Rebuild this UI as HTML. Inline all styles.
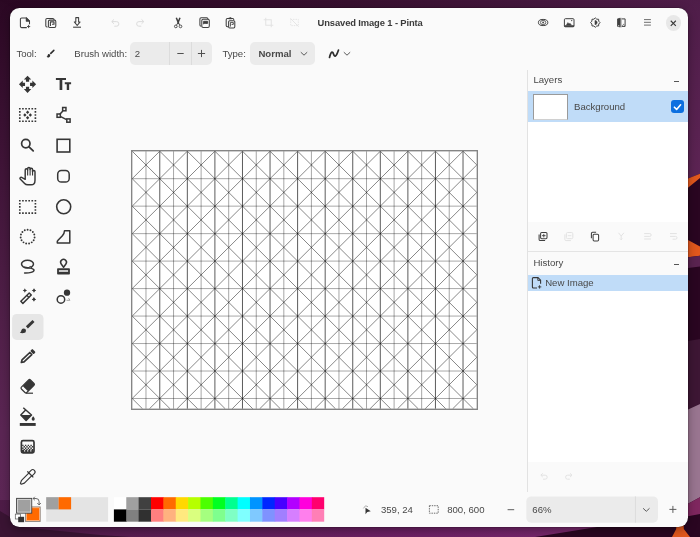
<!DOCTYPE html>
<html><head><meta charset="utf-8"><title>Pinta</title>
<style>
html,body{margin:0;padding:0;}
body{width:700px;height:537px;overflow:hidden;position:relative;background:#2c0a25;font-family:"Liberation Sans",sans-serif;color:#484848;font-size:9.6px;}
#wall{position:absolute;left:0;top:0;}
#win{position:absolute;left:10px;top:8px;width:678.2px;height:519px;background:#fafafa;border-radius:9.5px;box-shadow:0 0 0 0.5px rgba(0,0,0,.25),0 3px 10px rgba(0,0,0,.35);overflow:hidden;}
.t{position:absolute;white-space:nowrap;line-height:12px;height:12px;}
.b{font-weight:bold;}
.abs{position:absolute;}
svg{position:absolute;overflow:visible;}
</style></head><body>
<svg id="wall" width="700" height="537" viewBox="0 0 700 537">
<defs>
<linearGradient id="gl" x1="0" y1="0" x2="0" y2="1"><stop offset="0" stop-color="#2b0823"/><stop offset="0.3" stop-color="#3f1437"/><stop offset="0.6" stop-color="#512049"/><stop offset="0.8" stop-color="#5b2654"/><stop offset="1" stop-color="#5e2757"/></linearGradient>
<linearGradient id="gt" x1="0" y1="0" x2="1" y2="0"><stop offset="0" stop-color="#2a0722"/><stop offset="0.5" stop-color="#37102f"/><stop offset="1" stop-color="#4f1d49"/></linearGradient>
<linearGradient id="gr" x1="0" y1="0" x2="0" y2="1"><stop offset="0" stop-color="#4f1d49"/><stop offset="1" stop-color="#5d2454"/></linearGradient>
<linearGradient id="gb" x1="0" y1="0" x2="1" y2="0"><stop offset="0" stop-color="#4e1c47"/><stop offset="0.35" stop-color="#5f1e58"/><stop offset="0.6" stop-color="#6a1f62"/><stop offset="0.8" stop-color="#722469"/><stop offset="1" stop-color="#7a2a6c"/></linearGradient>
</defs>
<rect width="700" height="537" fill="#2a0621"/>
<!-- top strip -->
<rect x="0" y="0" width="700" height="20" fill="url(#gt)"/>
<!-- left strip -->
<polygon points="0,0 30,20 30,537 0,537" fill="url(#gl)"/>
<!-- bottom strip -->
<polygon points="0,500 620,500 597,527 535,537 0,537" fill="url(#gb)"/>
<polygon points="0,511 10,517 25,527.500 100,535 130,537 0,537" fill="#3a1433"/>
<!-- right strip -->
<polygon points="670,20 700,0 700,173.700 688,178.400 670,185" fill="url(#gr)"/>
<polygon points="670,185 688,178.400 700,173.700 700,177.900 688,187.700 670,202" fill="#e2581d"/>
<polygon points="670,230 688,240 700,246.500 700,255.800 688,257.200 670,259" fill="#e2581d"/>
<polygon points="670,259 688,257.200 700,255.800 700,266.500 688,267.900 670,270" fill="#5a2350"/>
<polygon points="670,343.500 688,340.900 700,339 700,404 688,409.500 670,418" fill="#3d1634"/>
<polygon points="670,418 688,409.500 700,404 700,497.200 688,503.700 670,513" fill="#997590"/>
<polygon points="670,513 688,503.700 700,497.200 700,514 688,516.300 670,520" fill="#7f275f"/>
<polygon points="676.600,520 683.400,520 683.800,529 690,537 672,537 676.200,529" fill="#e2581d"/>
</svg>
<div id="win"><div id="in" style="position:absolute;left:0;top:-1px;width:678.2px;height:520px;will-change:transform;">

<!-- ===== header bar ===== -->
<svg class="hi" style="left:100px;top:10.5px" width="10.5" height="10.5" viewBox="0 0 16 16" fill="none" stroke="#dadada" stroke-width="1.5"><path d="M3 5.5h7a3.5 3.5 0 0 1 0 7H6.5"/><path d="M6 2.2L2.6 5.5 6 8.8" /></svg>
<svg class="hi" style="left:125px;top:10.5px" width="10.5" height="10.5" viewBox="0 0 16 16" fill="none" stroke="#dadada" stroke-width="1.5"><path d="M13 5.5H6a3.5 3.5 0 0 0 0 7h3.5"/><path d="M10 2.2l3.4 3.3L10 8.800" /></svg>
<svg class="hi" style="left:252.500px;top:10px" width="11" height="11" viewBox="0 0 16 16" fill="none" stroke="#e3e3e3" stroke-width="1.500"><path d="M4 1v11h11M1 4h11v11"/></svg>
<svg class="hi" style="left:278.500px;top:10px" width="11" height="11" viewBox="0 0 16 16" fill="none" stroke="#e4e4e4" stroke-width="1.400"><rect x="2.500" y="3.500" width="11" height="9" stroke-dasharray="2 1.500"/><path d="M2 2l12 12"/></svg>
<div class="t b" id="title" style="left:307.600px;top:9.500px;font-size:9.400px;letter-spacing:-0.120px;color:#3a3a3a;">Unsaved Image 1 - Pinta</div>
<div class="abs" style="left:655.600px;top:8.300px;width:15.400px;height:15.400px;border-radius:50%;background:#e8e8e8;"></div>
<svg class="hi" style="left:660.1px;top:12.8px" width="6.6" height="6.6" viewBox="0 0 7 7" fill="none" stroke="#383838" stroke-width="1.15"><path d="M.8 .8l5.400 5.400M6.200 .8L.8 6.200"/></svg>

<svg id="hdr" style="left:-10px;top:-7px" width="700" height="537" viewBox="0 0 700 537">
<g fill="none" stroke="#404040" stroke-width="1.05" stroke-linejoin="round">
<!-- new -->
<path d="M26.800 27.600H21.700a1.300 1.300 0 0 1-1.300-1.300V19.200a1.300 1.300 0 0 1 1.300-1.300h4.600l3.200 3.200v3.200"/>
<path d="M26.300 17.900v3.200h3.200z" fill="#404040"/>
<path d="M28.600 24.900v3.200M27 26.500h3.200" stroke-width="0.9"/>
<!-- open -->
<path d="M47.600 26.900h-.6a1.200 1.200 0 0 1-1.200-1.200v-6a1.200 1.200 0 0 1 1.200-1.200h5.800a1.200 1.200 0 0 1 1.200 1.200v.4"/>
<rect x="48.400" y="20.100" width="7.400" height="7.300" rx="1.400"/>
<path d="M50.400 26V21.900h3.600v2.300h-2" stroke-width="1.100"/>
<!-- cut -->
<path d="M176.300 17.700l2.500 6.200M180 17.700l-2.500 6.200" stroke-width="1.500"/>
<path d="M177.500 23.500l-1 1.600M178.800 23.500l1 1.600" stroke-width="0.9"/>
<circle cx="175.800" cy="26.400" r="1.350" stroke-width="0.9"/><circle cx="180.500" cy="26.400" r="1.350" stroke-width="0.9"/>
<!-- copy -->
<path d="M201.400 26.200h-.3a1.200 1.200 0 0 1-1.200-1.200v-6a1.200 1.200 0 0 1 1.200-1.200h5.600a1.200 1.200 0 0 1 1.200 1.200v.2"/>
<rect x="201.800" y="19.200" width="7.500" height="8.200" rx="1.400"/>
<path d="M203.600 24.200V21.300h4v2.100h-2.400" stroke-width="0.900" fill="#404040"/>
<!-- paste -->
<path d="M228.400 26.700h-1a1.200 1.200 0 0 1-1.200-1.200v-5.800a1.200 1.200 0 0 1 1.200-1.200h5.200a1.200 1.200 0 0 1 1.200 1.200v.6"/>
<path d="M228.600 18.800v-.6h1l.6-.9.600 .9h1v.6z" fill="#404040" stroke-width="0.8"/>
<rect x="228.600" y="20.700" width="6.200" height="7.200" rx="1.100"/>
<path d="M230.400 26.600v-4.200h2.900v2h-1.700" stroke-width="0.900"/>
<!-- view -->
<ellipse cx="543.100" cy="22.500" rx="4.700" ry="3.100" stroke-width="1"/>
<ellipse cx="543.100" cy="22.500" rx="2.700" ry="2.100" stroke-width="0.800"/>
<circle cx="543.100" cy="22.500" r="0.900" fill="#404040" stroke="none"/>
<!-- image -->
<rect x="564.400" y="18.700" width="9.600" height="8" rx="1" stroke-width="1"/>
<path d="M564.400 25.600h9.600v.6a.5 .5 0 0 1-.5 .5h-8.600a.5 .5 0 0 1-.5-.5z" fill="#404040" stroke-width="0.6"/>
<path d="M566.300 25.200l1.600-2.600 1.200 1.400.9-.8 1.500 2z" fill="#404040" stroke-width="0.5"/>
<circle cx="571.700" cy="20.600" r="0.700" fill="#404040" stroke="none"/>
<!-- adjustments -->
<polygon points="595.30,17.90 596.72,19.18 598.62,19.28 598.72,21.18 600.00,22.60 598.72,24.02 598.62,25.92 596.72,26.02 595.30,27.30 593.88,26.02 591.98,25.92 591.88,24.02 590.60,22.60 591.88,21.18 591.98,19.28 593.88,19.18" stroke-width="1"/>
<path d="M595 20.500a2.100 2.100 0 0 1 0 4.200z" fill="#404040" stroke-width="0.600"/>
<!-- effects -->
<path d="M620 18.300l-2.500 .6v7.400l2.500 .6z" fill="#404040" stroke-width="0.800"/>
<path d="M621.800 18.900h3.300v7.500h-3.300" stroke-width="1"/>
<path d="M620.900 17.800v9.600" stroke-width="0.800"/><path d="M618.200 25.300h1v1h-1z" fill="#fafafa" stroke="none"/>
<path d="M622.400 25.800l1.100-1.500 1.100 1" stroke-width="0.700"/>
<!-- menu -->
<path d="M644 19.600h6.900M644 22.300h6.900M644 25.100h6.900" stroke="#5e5e5e" stroke-width="0.9"/>
<!-- save -->
<path d="M75.800 17.600h2.800v4.300h1.500l-2.900 3.600-2.900-3.600h1.500z"/>
<path d="M73.100 27.200h7.900" stroke-width="1.100"/>
</g>
</svg>
<!-- ===== tool options bar ===== -->
<div class="t" style="left:6.400px;top:41.100px;">Tool:</div>
<svg style="left:36.3px;top:41.9px" width="9.2" height="9.2" viewBox="0 0 16 16"><path d="M14.600 1.400a1.300 1.300 0 0 0-1.900 0L6.500 7.600l1.900 1.900 6.200-6.200a1.300 1.300 0 0 0 0-1.900z" fill="#2e2e2e"/><path d="M5.600 8.600C4 8.400 2.800 9.600 2.800 11.200c0 1.200-.8 2-1.800 2.400 1 1 2.400 1.400 3.800 1 2-.6 2.800-2.400 2.400-4.200z" fill="#2e2e2e"/></svg>
<div class="t" style="left:64.300px;top:41.100px;">Brush width:</div>
<div class="abs" style="left:120.300px;top:35px;width:82.200px;height:22.800px;border-radius:5px;background:#ebebeb;"></div>
<div class="abs" style="left:159.200px;top:35px;width:1px;height:22.800px;background:#dcdcdc;"></div>
<div class="abs" style="left:180.700px;top:35px;width:1px;height:22.800px;background:#dcdcdc;"></div>
<div class="t" style="left:124.700px;top:41.100px;">2</div>
<svg style="left:165.5px;top:42px" width="9" height="9" viewBox="0 0 9 9" stroke="#505050" stroke-width="1"><path d="M1.3 4.5h6.4"/></svg>
<svg style="left:187px;top:42px" width="9" height="9" viewBox="0 0 9 9" stroke="#505050" stroke-width="1"><path d="M0.9 4.5h7.2M4.5 0.9v7.2"/></svg>
<div class="t" style="left:212.400px;top:41.100px;">Type:</div>
<div class="abs" style="left:240px;top:34.500px;width:65px;height:23.200px;border-radius:5px;background:#ebebeb;"></div>
<div class="t b" style="left:248.400px;top:41.100px;font-size:9.600px;">Normal</div>
<svg style="left:290px;top:44px" width="8" height="6" viewBox="0 0 8 6" fill="none" stroke="#5a5a5a" stroke-width="1"><path d="M.8 1.200l3.200 3 3.200-3"/></svg>
<svg style="left:317.500px;top:40.500px" width="12" height="12" viewBox="0 0 12 12" fill="none" stroke="#2e2e2e" stroke-width="1.700" stroke-linecap="round" stroke-linejoin="round"><path d="M1.500 9.500C3 3 4.500 3 5.500 6S8 9.500 10.500 2"/></svg>
<svg style="left:333px;top:44px" width="8" height="6" viewBox="0 0 8 6" fill="none" stroke="#5a5a5a" stroke-width="1"><path d="M.8 1.200l3.200 3 3.200-3"/></svg>

<!-- ===== toolbox ===== -->
<svg style="left:-10px;top:-7px" width="700" height="537" viewBox="0 0 700 537">
<g fill="#363636"><path transform="translate(27.55 84.3) rotate(0)" d="M0 -8.6L3.7 -4.8H1.6V-2.5H-1.6V-4.8H-3.7z"/><path transform="translate(27.55 84.3) rotate(90)" d="M0 -8.6L3.7 -4.8H1.6V-2.5H-1.6V-4.8H-3.7z"/><path transform="translate(27.55 84.3) rotate(180)" d="M0 -8.6L3.7 -4.8H1.6V-2.5H-1.6V-4.8H-3.7z"/><path transform="translate(27.55 84.3) rotate(270)" d="M0 -8.6L3.7 -4.8H1.6V-2.5H-1.6V-4.8H-3.7z"/></g>
<path fill="#363636" d="M55.900 78h10.100v2.100h-3.700v10h-2.700v-10h-3.700z"/>
<path fill="#363636" d="M64.800 82.300h6.300v1.900h-1.950v5.900h-2.400v-5.900h-1.950z"/>
<path fill="#363636" d="M18.98 107.97h1.65v1.65h-1.65zM18.98 111.07h1.65v1.65h-1.65zM18.98 114.17h1.65v1.65h-1.65zM18.98 117.27h1.65v1.65h-1.65zM18.98 120.38h1.65v1.65h-1.65zM22.10 107.97h1.65v1.65h-1.65zM22.10 120.38h1.65v1.65h-1.65zM25.21 107.97h1.65v1.65h-1.65zM25.21 120.38h1.65v1.65h-1.65zM28.34 107.97h1.65v1.65h-1.65zM28.34 120.38h1.65v1.65h-1.65zM31.46 107.97h1.65v1.65h-1.65zM31.46 120.38h1.65v1.65h-1.65zM34.58 107.97h1.65v1.65h-1.65zM34.58 111.07h1.65v1.65h-1.65zM34.58 114.17h1.65v1.65h-1.65zM34.58 117.27h1.65v1.65h-1.65zM34.58 120.38h1.65v1.65h-1.65z"/>
<path fill="#363636" d="M27.60 110.60L29.25 112.25L27.60 113.90L25.95 112.25zM30.35 113.35L32.00 115.00L30.35 116.65L28.70 115.00zM27.60 116.10L29.25 117.75L27.60 119.40L25.95 117.75zM24.85 113.35L26.50 115.00L24.85 116.65L23.20 115.00z"/>
<g fill="none" stroke="#363636" stroke-width="1.5"><path d="M62.900 110.900L59.800 114.300M60.700 116.700L66.600 119.700"/><rect x="62.650" y="107.500" width="3.300" height="3.300"/><rect x="57.050" y="114" width="3.300" height="3.300"/><rect x="66.800" y="118.900" width="3.300" height="3.300"/></g>
<g fill="none" stroke="#363636" stroke-width="1.7"><circle cx="25.800" cy="143.600" r="4.200"/><path d="M29 146.900L33.200 150.900" stroke-width="1.8" stroke-linecap="round"/></g>
<rect x="57.100" y="139.300" width="12.700" height="12.700" fill="none" stroke="#363636" stroke-width="1.6"/>
<path fill="none" stroke="#363636" stroke-width="1.45" stroke-linejoin="round" stroke-linecap="round" d="M25.200 179.300V170a1.225 1.225 0 0 1 2.450 0V168.700a1.225 1.225 0 0 1 2.450 0V169.400a1.225 1.225 0 0 1 2.450 0V171.800a1.225 1.225 0 0 1 2.450 0V180.200C35 183 33.700 184.800 31.100 184.800H27.800C26.400 184.800 25.400 184.300 24.600 183.400L20.200 179C19.400 178 20.600 176.900 21.600 177.400z"/>
<path fill="none" stroke="#363636" stroke-width="1.1" d="M27.650 170V175.400M30.100 169.200V175.400M32.550 170.500V175.400"/>
<rect x="57.700" y="170.500" width="11.500" height="11.600" rx="3.700" fill="none" stroke="#363636" stroke-width="1.5"/>
<path fill="#363636" d="M18.98 199.88h1.65v1.65h-1.65zM18.98 202.97h1.65v1.65h-1.65zM18.98 206.07h1.65v1.65h-1.65zM18.98 209.18h1.65v1.65h-1.65zM18.98 212.28h1.65v1.65h-1.65zM22.10 199.88h1.65v1.65h-1.65zM22.10 212.28h1.65v1.65h-1.65zM25.21 199.88h1.65v1.65h-1.65zM25.21 212.28h1.65v1.65h-1.65zM28.34 199.88h1.65v1.65h-1.65zM28.34 212.28h1.65v1.65h-1.65zM31.46 199.88h1.65v1.65h-1.65zM31.46 212.28h1.65v1.65h-1.65zM34.58 199.88h1.65v1.65h-1.65zM34.58 202.97h1.65v1.65h-1.65zM34.58 206.07h1.65v1.65h-1.65zM34.58 209.18h1.65v1.65h-1.65zM34.58 212.28h1.65v1.65h-1.65z"/>
<circle cx="63.700" cy="206.800" r="7" fill="none" stroke="#363636" stroke-width="1.6"/>
<g fill="#363636"><circle cx="27.62" cy="229.70" r="0.95"/><circle cx="30.47" cy="230.31" r="0.95"/><circle cx="32.82" cy="232.02" r="0.95"/><circle cx="34.28" cy="234.54" r="0.95"/><circle cx="34.58" cy="237.43" r="0.95"/><circle cx="33.68" cy="240.20" r="0.95"/><circle cx="31.73" cy="242.36" r="0.95"/><circle cx="29.08" cy="243.55" r="0.95"/><circle cx="26.16" cy="243.55" r="0.95"/><circle cx="23.51" cy="242.36" r="0.95"/><circle cx="21.56" cy="240.20" r="0.95"/><circle cx="20.66" cy="237.43" r="0.95"/><circle cx="20.96" cy="234.54" r="0.95"/><circle cx="22.42" cy="232.02" r="0.95"/><circle cx="24.77" cy="230.31" r="0.95"/></g>
<path fill="none" stroke="#363636" stroke-width="1.5" stroke-linejoin="round" d="M64.500 230.700H69.800V243H57.300V241.600C57.300 241.200 57.500 240.900 57.800 240.600L62.400 235.700C63.800 234.200 64.400 232.800 64.500 230.700z"/>
<g fill="none" stroke="#363636" stroke-width="1.5" stroke-linecap="round"><ellipse cx="27.500" cy="264.100" rx="6" ry="3.800"/><path d="M24.400 267.200C29 268.200 33.500 268 34 270C34.400 272.200 29 273.200 24.600 273"/><circle cx="30.300" cy="267.300" r="0.900" fill="#fafafa" stroke-width="0.9"/></g>
<path fill="none" stroke="#363636" stroke-width="1.5" stroke-linejoin="round" d="M63.550 267.300L61.200 264A2.900 2.900 0 1 1 65.900 264z"/>
<path fill="#363636" d="M57.900 268.300H69.100a.8 .8 0 0 1 .8 .8V273.800a.8 .8 0 0 1-.8 .8H57.900a.8 .8 0 0 1-.8-.8V269.100a.8 .8 0 0 1 .8-.8zM58.900 270.200h9.200v1.500H58.900z" fill-rule="evenodd"/>
<g transform="translate(26.05 298.2) rotate(-44.7)"><rect x="-5.9" y="-1.45" width="11.8" height="2.9" fill="none" stroke="#363636" stroke-width="1.5" stroke-linejoin="round"/><path d="M2.6 -1.600V1.600" stroke="#363636" stroke-width="1.2"/></g>
<path fill="#363636" d="M24.85 288.3L25.58 289.77L27.05 290.5L25.58 291.23L24.85 292.7L24.12 291.23L22.650000000000002 290.5L24.12 289.77z"/><path fill="#363636" d="M33.95 288.3L34.68 289.77L36.150000000000006 290.5L34.68 291.23L33.95 292.7L33.22 291.23L31.750000000000004 290.5L33.22 289.77z"/><path fill="#363636" d="M33.95 297.3L34.68 298.77L36.150000000000006 299.5L34.68 300.23L33.95 301.7L33.22 300.23L31.750000000000004 299.5L33.22 298.77z"/>
<path fill="#363636" d="M34.1 288.40000000000003L34.632000000000005 289.76800000000003L36.0 290.3L34.632000000000005 290.832L34.1 292.2L33.568 290.832L32.2 290.3L33.568 289.76800000000003z"/>
<path fill="#363636" d="M33.9 297.09999999999997L34.488 298.61199999999997L36.0 299.2L34.488 299.788L33.9 301.3L33.312 299.788L31.799999999999997 299.2L33.312 298.61199999999997z"/>
<circle cx="60.950" cy="299.400" r="3.750" fill="none" stroke="#363636" stroke-width="1.5"/><circle cx="67" cy="292.700" r="3.150" fill="#363636"/><path d="M66.500 300.300h3.400l-1.300-2.200" fill="none" stroke="#8a8a8a" stroke-width="0.800"/>
<rect x="12.100" y="314" width="31.400" height="25.900" rx="4.500" fill="#e6e6e6"/>
<path d="M33.5 321L26.9 327.4" stroke="#363636" stroke-width="2.9" fill="none" stroke-linecap="butt"/>
<circle cx="23.7" cy="330.8" r="2.3" fill="#363636"/><path fill="#363636" d="M21.5 330.3c-.1 1.100-.6 1.800-1.700 2.200 1.500.9 3.300.9 4.600.3z"/>
<g transform="translate(20.7 363.1) rotate(-43.4)"><path fill="none" stroke="#363636" stroke-width="1.7" stroke-linejoin="round" d="M0.900 0L3.200 -1.450H13.900V1.450H3.200z"/><rect x="15.300" y="-2.400" width="3" height="4.800" rx=".9" fill="#363636"/></g>
<g transform="translate(27.7 386.2) rotate(-45)"><rect x="-6.400" y="-3.800" width="12.800" height="7.600" rx="1.300" fill="none" stroke="#363636" stroke-width="1.2"/><rect x="-3.400" y="-3.800" width="9.800" height="7.600" rx="1.100" fill="#363636"/></g>
<path d="M25.800 393.200H33" stroke="#363636" stroke-width="1.2"/>
<path fill="none" stroke="#363636" stroke-width="1.5" stroke-linejoin="round" d="M23.300 407.700L31.500 414.950L26.100 420.400L20.800 414.950L25.400 410.300"/><path fill="#363636" d="M20.800 414.950H31.500L26.100 420.400z"/><path fill="#363636" d="M33.200 416.300c.9 1.200 1.550 2 1.550 2.800a1.550 1.550 0 0 1-3.100 0c0-.8.650-1.600 1.550-2.800z"/><rect x="19.800" y="423" width="15.900" height="2.900" fill="#363636"/>
<rect x="21.400" y="440.600" width="12.600" height="12.300" rx="1.600" fill="none" stroke="#363636" stroke-width="1.700"/>
<path fill="#363636" d="M22.20 444.7h1.370v1.400h-1.370zM24.94 444.7h1.370v1.400h-1.370zM27.68 444.7h1.370v1.400h-1.370zM30.42 444.7h1.370v1.400h-1.370zM23.57 446.1h1.370v1.400h-1.370zM26.31 446.1h1.370v1.400h-1.370zM29.05 446.1h1.370v1.400h-1.370zM31.79 446.1h1.370v1.400h-1.370zM22.20 447.5h1.370v1.400h-1.370zM24.94 447.5h1.370v1.400h-1.370zM27.68 447.5h1.370v1.400h-1.370zM30.42 447.5h1.370v1.400h-1.370zM23.57 448.9h1.370v1.400h-1.370zM26.31 448.9h1.370v1.400h-1.370zM29.05 448.9h1.370v1.400h-1.370zM31.79 448.9h1.370v1.400h-1.370z"/>
<path fill="#363636" d="M22 449.800H33.400V452.400H22z"/>
<path fill="#fafafa" d="M24 450.300h1.200v1.200H24zM27.100 450.300h1.200v1.200h-1.200zM30.200 450.300h1.200v1.200h-1.200z"/>
<g transform="translate(30.17 474.5) rotate(-45)" fill="none" stroke="#363636" stroke-width="1.15" stroke-linejoin="round" stroke-linecap="round"><path d="M0 -2H-10.200L-13.200 -0.600V0.600L-10.200 2H0"/><path d="M0.200 -3.700V3.700" stroke-width="1.2"/><path d="M0.400 -2.300H3.600A2.300 2.300 0 0 1 3.600 2.300H0.400"/></g>
</svg>

<!-- ===== canvas ===== -->

<svg style="left:121px;top:143px" width="347" height="260" viewBox="0 0 347 260"><rect width="347" height="260" fill="#858585"/><svg x="1.2" y="1.2" width="344.6" height="257.6" viewBox="0 0 800 600" preserveAspectRatio="none" style="overflow:hidden"><rect width="800" height="600" fill="#fff"/><path d="M64 0V600M128 0V600M192 0V600M256 0V600M320 0V600M384 0V600M448 0V600M512 0V600M576 0V600M640 0V600M704 0V600M768 0V600" stroke="#000" stroke-width="1.5" fill="none"/><path d="M32 0V600M96 0V600M160 0V600M224 0V600M288 0V600M352 0V600M416 0V600M480 0V600M544 0V600M608 0V600M672 0V600M736 0V600" stroke="#000" stroke-width="0.82" fill="none"/><path d="M0 64H800M0 128H800M0 192H800M0 256H800M0 320H800M0 384H800M0 448H800M0 512H800M0 576H800" stroke="#000" stroke-width="0.8" fill="none"/><path d="M768 0L800 32M704 0L800 96M640 0L800 160M576 0L800 224M512 0L800 288M448 0L800 352M384 0L800 416M320 0L800 480M256 0L800 544M192 0L792 600M128 0L728 600M64 0L664 600M0 0L600 600M0 64L536 600M0 128L472 600M0 192L408 600M0 256L344 600M0 320L280 600M0 384L216 600M0 448L152 600M0 512L88 600M0 576L24 600M0 64L64 0M0 128L128 0M0 192L192 0M0 256L256 0M0 320L320 0M0 384L384 0M0 448L448 0M0 512L512 0M0 576L576 0M40 600L640 0M104 600L704 0M168 600L768 0M232 600L800 32M296 600L800 96M360 600L800 160M424 600L800 224M488 600L800 288M552 600L800 352M616 600L800 416M680 600L800 480M744 600L800 544" stroke="#000" stroke-width="1.1" fill="none"/></svg></svg>

<!-- ===== right panel ===== -->
<div class="abs" style="left:517.2px;top:63px;width:1px;height:421.5px;background:#e2e2e2;"></div>
<div class="t" style="left:523.4px;top:67.0px;">Layers</div>
<div class="abs" style="left:663.8px;top:74.3px;width:5.6px;height:1px;background:#555;"></div>
<div class="abs" style="left:518.2px;top:84.2px;width:160px;height:130.8px;background:#ffffff;"></div>
<div class="abs" style="left:518.2px;top:84.2px;width:160px;height:30.4px;background:#c0dcf8;"></div>
<div class="abs" style="left:522.9px;top:86.800px;width:35.2px;height:26px;background:#fff;box-sizing:border-box;border:1px solid #9a9a9a;border-bottom-color:#d0d0d0;"></div>
<div class="t" style="left:564px;top:94.1px;">Background</div>
<div class="abs" style="left:661px;top:93.2px;width:12.8px;height:13px;border-radius:3px;background:#0c6fe0;"></div>
<svg style="left:663px;top:95.600px" width="9" height="8" viewBox="0 0 9 8" fill="none" stroke="#fff" stroke-width="1.6" stroke-linecap="round" stroke-linejoin="round"><path d="M1.400 4.200l2.200 2.200 4-4.600"/></svg>
<div class="abs" style="left:518.2px;top:244.400px;width:160px;height:1px;background:#e4e4e4;"></div>
<div class="t" style="left:523.4px;top:250.2px;">History</div>
<div class="abs" style="left:663.8px;top:257.1px;width:5.6px;height:1px;background:#555;"></div>
<div class="abs" style="left:518.2px;top:267.600px;width:160px;height:187.300px;background:#ffffff;"></div>
<div class="abs" style="left:518.2px;top:267.600px;width:160px;height:16.200px;background:#c0dcf8;"></div>
<div class="t" style="left:535.2px;top:270.1px;">New Image</div>
<svg style="left:-10px;top:-7px" width="700" height="537" viewBox="0 0 700 537">
<!-- layer buttons -->
<g fill="none" stroke="#404040" stroke-width="1.05">
<path d="M539.100 234.400v5a1.200 1.200 0 0 0 1.200 1.200h4.800"/><rect x="540.600" y="232.500" width="6.400" height="6.200" rx="1.100"/><path d="M543.800 233.900v3.500M542.050 235.650h3.500" stroke-width="0.9"/>
<path d="M591.400 238.300v-4.800a1.200 1.200 0 0 1 1.200-1.200h3.500"/><rect x="593.100" y="234.200" width="5.500" height="6.700" rx="1.100" fill="#fff"/>
</g>
<g fill="none" stroke="#e2e2e2" stroke-width="1">
<path d="M564.900 234.400v5a1.200 1.200 0 0 0 1.200 1.200h4.800"/><rect x="566.400" y="232.500" width="6.400" height="6.200" rx="1.100"/><path d="M567.850 235.650h3.500" stroke-width="0.9"/>
<path d="M618.500 232.800l2.700 3.200 2.700-3.200M621.200 236v3.600M620 238.600l1.200 1.200 1.200-1.200"/>
<path d="M644.200 233.600h5.600a1.400 1.400 0 0 1 0 2.800h-5.600M644.200 239h6.800"/>
<path d="M670 233.600h6.800M670 236.400h5.600a1.400 1.400 0 0 1 0 2.800h-3"/>
<!-- history undo/redo -->
<path d="M541 475.200h4.200a2 2 0 0 1 0 4h-2.200M542.700 473.400l-1.900 1.800 1.900 1.800"/>
<path d="M571.800 475.200h-4.200a2 2 0 0 0 0 4h2.200M570.100 473.400l1.900 1.800-1.900 1.800"/>
</g>
<!-- history doc icon -->
<g fill="none" stroke="#363636" stroke-width="1.1"><path d="M537 288h-3.600a1 1 0 0 1-1-1v-8.400a1 1 0 0 1 1-1h4.600l2.600 2.600v3.600"/><path d="M537.800 277.800v2.600h2.600" stroke-width=".9"/><path d="M539.600 285.200v3.400M537.900 286.900h3.400" stroke-width=".9"/></g>
</svg>

<!-- ===== bottom bar ===== -->
<svg style="left:-10px;top:-7px" width="700" height="537" viewBox="0 0 700 537">
<!-- primary / secondary swatches -->
<rect x="25.500" y="506.900" width="14.700" height="14.600" fill="#ff6a00" stroke="#8c8c8c" stroke-width="0.9"/>
<rect x="26.400" y="507.800" width="12.900" height="12.800" fill="none" stroke="#ffd9bf" stroke-width="0.6"/>
<rect x="16.600" y="498.400" width="15.100" height="14.700" fill="#a0a0a0" stroke="#474747" stroke-width="1"/>
<rect x="17.600" y="499.400" width="13.100" height="12.700" fill="none" stroke="#d6d6d6" stroke-width="0.900"/>
<rect x="15.300" y="514.100" width="5.200" height="4.900" fill="#fff" stroke="#555" stroke-width="0.700"/>
<rect x="18.200" y="516.800" width="5.900" height="5.400" fill="#333"/>
<path d="M33.200 498.500h2.800a3.100 3.100 0 0 1 3.100 3.100v3.200M34.800 496.800l-1.700 1.700 1.700 1.700M37.300 503.100l1.800 1.800 1.800-1.800" fill="none" stroke="#444" stroke-width="0.800"/>
<!-- recent colours -->
<rect x="46.200" y="497.200" width="61.900" height="24.500" fill="#e4e4e4"/>
<rect x="46.200" y="497.200" width="12.400" height="12.200" fill="#a0a0a0"/>
<rect x="58.600" y="497.200" width="12.500" height="12.200" fill="#ff6a00"/>
<!-- palette -->
<rect x="113.90" y="497.2" width="12.9" height="12.25" fill="rgb(255, 255, 255)"/>
<rect x="113.90" y="509.4" width="12.9" height="12.3" fill="rgb(0, 0, 0)"/>
<rect x="126.27" y="497.2" width="12.9" height="12.25" fill="rgb(160, 160, 160)"/>
<rect x="126.27" y="509.4" width="12.9" height="12.3" fill="rgb(128, 128, 128)"/>
<rect x="138.64" y="497.2" width="12.9" height="12.25" fill="rgb(64, 64, 64)"/>
<rect x="138.64" y="509.4" width="12.9" height="12.3" fill="rgb(48, 48, 48)"/>
<rect x="151.01" y="497.2" width="12.9" height="12.25" fill="rgb(255, 0, 0)"/>
<rect x="151.01" y="509.4" width="12.9" height="12.3" fill="rgb(255, 127, 127)"/>
<rect x="163.38" y="497.2" width="12.9" height="12.25" fill="rgb(255, 106, 0)"/>
<rect x="163.38" y="509.4" width="12.9" height="12.3" fill="rgb(255, 178, 127)"/>
<rect x="175.75" y="497.2" width="12.9" height="12.25" fill="rgb(255, 216, 0)"/>
<rect x="175.75" y="509.4" width="12.9" height="12.3" fill="rgb(255, 233, 127)"/>
<rect x="188.12" y="497.2" width="12.9" height="12.25" fill="rgb(182, 255, 0)"/>
<rect x="188.12" y="509.4" width="12.9" height="12.3" fill="rgb(218, 255, 127)"/>
<rect x="200.49" y="497.2" width="12.9" height="12.25" fill="rgb(76, 255, 0)"/>
<rect x="200.49" y="509.4" width="12.9" height="12.3" fill="rgb(165, 255, 127)"/>
<rect x="212.86" y="497.2" width="12.9" height="12.25" fill="rgb(0, 255, 33)"/>
<rect x="212.86" y="509.4" width="12.9" height="12.3" fill="rgb(127, 255, 142)"/>
<rect x="225.23" y="497.2" width="12.9" height="12.25" fill="rgb(0, 255, 144)"/>
<rect x="225.23" y="509.4" width="12.9" height="12.3" fill="rgb(127, 255, 197)"/>
<rect x="237.60" y="497.2" width="12.9" height="12.25" fill="rgb(0, 255, 255)"/>
<rect x="237.60" y="509.4" width="12.9" height="12.3" fill="rgb(127, 255, 255)"/>
<rect x="249.97" y="497.2" width="12.9" height="12.25" fill="rgb(0, 148, 255)"/>
<rect x="249.97" y="509.4" width="12.9" height="12.3" fill="rgb(127, 201, 255)"/>
<rect x="262.34" y="497.2" width="12.9" height="12.25" fill="rgb(0, 38, 255)"/>
<rect x="262.34" y="509.4" width="12.9" height="12.3" fill="rgb(127, 146, 255)"/>
<rect x="274.71" y="497.2" width="12.9" height="12.25" fill="rgb(72, 0, 255)"/>
<rect x="274.71" y="509.4" width="12.9" height="12.3" fill="rgb(161, 127, 255)"/>
<rect x="287.08" y="497.2" width="12.9" height="12.25" fill="rgb(178, 0, 255)"/>
<rect x="287.08" y="509.4" width="12.9" height="12.3" fill="rgb(214, 127, 255)"/>
<rect x="299.45" y="497.2" width="12.9" height="12.25" fill="rgb(255, 0, 220)"/>
<rect x="299.45" y="509.4" width="12.9" height="12.3" fill="rgb(255, 127, 237)"/>
<rect x="311.82" y="497.2" width="12.37" height="12.25" fill="rgb(255, 0, 110)"/>
<rect x="311.82" y="509.4" width="12.37" height="12.3" fill="rgb(255, 127, 182)"/>
<!-- status icons -->
<path d="M365.500 507.700L370.800 511.300L367.300 512.100L365.500 514.200z" fill="#363636"/><path d="M363.400 508.400L365.500 505.800L368 506.700" fill="none" stroke="#9a9a9a" stroke-width="0.800"/>
<rect x="429.400" y="505.700" width="8.800" height="7.500" fill="none" stroke="#5c5c5c" stroke-width="0.900" stroke-dasharray="1.400 1"/>
<path d="M507.600 509.700h6.600" stroke="#555" stroke-width="0.95"/>
<path d="M669.400 509.400h7M672.900 505.900v7" stroke="#555" stroke-width="0.95"/>
<rect x="526.300" y="496.400" width="131.700" height="26.300" rx="5" fill="#ebebeb"/>
<path d="M635.400 496.400v26.300" stroke="#dcdcdc" stroke-width="1"/>
<path d="M643.100 508.300l3.200 3 3.200-3" fill="none" stroke="#5a5a5a" stroke-width="1"/>
</svg>
<div class="t" style="left:370.900px;top:497.100px;">359, 24</div>
<div class="t" style="left:437.200px;top:497.100px;">800, 600</div>
<div class="t" style="left:522.300px;top:497.100px;">66%</div>

</div></div>
</body></html>
